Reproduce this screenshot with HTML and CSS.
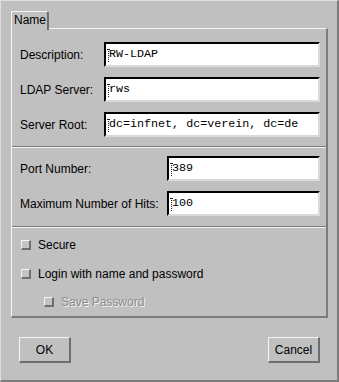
FILE: index.html
```html
<!DOCTYPE html>
<html lang="en">
<head>
  <meta charset="UTF-8" />
  <title>LDAP Server</title>
  <link rel="stylesheet" href="styles.css">
</head>
<body>
  <div class="window">
    <div class="tabs">
      <div class="tab">Name</div>
    </div>

    <div class="panel">
      <div class="form-grid server">
        <label>Description:</label>
        <div class="field"><span class="caret"></span>RW-LDAP</div>
        <label>LDAP Server:</label>
        <div class="field"><span class="caret"></span>rws</div>
        <label>Server Root:</label>
        <div class="field"><span class="caret"></span>dc=infnet, dc=verein, dc=de</div>
      </div>

      <div class="sep"></div>

      <div class="form-grid limits">
        <label>Port Number:</label>
        <div class="field"><span class="caret"></span>389</div>
        <label>Maximum Number of Hits:</label>
        <div class="field"><span class="caret"></span>100</div>
      </div>

      <div class="sep"></div>

      <div class="checks">
        <div class="check"><span class="box"></span>Secure</div>
        <div class="check"><span class="box"></span>Login with name and password</div>
        <div class="check sub disabled"><span class="box"></span>Save Password</div>
      </div>
    </div>

    <div class="buttons">
      <button class="btn">OK</button>
      <button class="btn">Cancel</button>
    </div>
  </div>
</body>
</html>
```

FILE: styles.css
```css
body {
  margin: 0;
  background: #c0c0c0;
  font-family: "Liberation Sans", Arial, sans-serif;
  font-size: 12px;
  color: #000;
}
.window {
  width: 339px;
  height: 382px;
  box-sizing: border-box;
  background: #c0c0c0;
  border-style: solid;
  border-width: 1px 2px 2px 1px;
  border-color: #dedede #7c7c7c #7c7c7c #dedede;
  padding: 10px 9px 0 10px;
}
.tabs {
  display: flex;
  position: relative;
  z-index: 1;
  margin-bottom: -2px;
}
.tab {
  width: 38px;
  height: 19px;
  box-sizing: border-box;
  background: #c0c0c0;
  border-style: solid;
  border-width: 1px 2px 0 1px;
  border-color: #f4f4f4 #6e6e6e #c0c0c0 #f4f4f4;
  border-top-right-radius: 3px;
  padding: 1px 0 0 2px;
  line-height: 14px;
}
.panel {
  height: 290px;
  box-sizing: border-box;
  border-style: solid;
  border-width: 1px 2px 2px 1px;
  border-color: #f4f4f4 #7c7c7c #7c7c7c #f4f4f4;
  padding: 13px 6px 0 8px;
}
.form-grid {
  display: grid;
  grid-auto-rows: 25px;
  row-gap: 10px;
  align-items: center;
}
.form-grid.server {
  grid-template-columns: 84px 1fr;
}
.form-grid.limits {
  grid-template-columns: 147px 1fr;
  margin-top: 8px;
}
.field {
  position: relative;
  height: 25px;
  box-sizing: border-box;
  background: #fff;
  border-style: solid;
  border-width: 2px;
  border-color: #000 #dadada #dadada #000;
  padding-left: 3px;
  font-family: "Liberation Mono", "Courier New", monospace;
  font-size: 11.7px;
  line-height: 21px;
  white-space: nowrap;
}
.caret {
  position: absolute;
  left: 2px;
  top: 5px;
  height: 13px;
  border-left: 1px dotted #222;
}
.caret::before {
  content: "";
  position: absolute;
  left: -2px;
  top: 0;
  width: 2px;
  border-top: 1px dotted #222;
}
.sep {
  margin: 9px -6px 0 -8px;
  border-top: 1px solid #7c7c7c;
  border-bottom: 1px solid #f4f4f4;
}
.limits + .sep {
  margin-top: 10px;
}
.checks {
  display: flex;
  flex-direction: column;
  gap: 12.5px;
  margin-top: 9px;
}
.check {
  display: flex;
  align-items: center;
  height: 16px;
  padding-left: 1px;
}
.check.sub {
  padding-left: 24px;
}
.box {
  width: 10px;
  height: 10px;
  box-sizing: border-box;
  margin-right: 7px;
  background: #c4c4c4;
  border-style: solid;
  border-width: 1px 2px 2px 1px;
  border-color: #f4f4f4 #6e6e6e #6e6e6e #f4f4f4;
}
.disabled {
  color: #8c8c8c;
  text-shadow: 1px 1px 0 #f4f4f4;
}
.buttons {
  display: flex;
  justify-content: space-between;
  margin-top: 19px;
  padding: 0 8px;
}
.btn {
  width: 52px;
  height: 26px;
  box-sizing: border-box;
  background: #c0c0c0;
  border-style: solid;
  border-width: 1px 2px 2px 1px;
  border-color: #f4f4f4 #6e6e6e #6e6e6e #f4f4f4;
  font-family: "Liberation Sans", Arial, sans-serif;
  font-size: 12px;
  color: #000;
  padding: 0;
}
```
